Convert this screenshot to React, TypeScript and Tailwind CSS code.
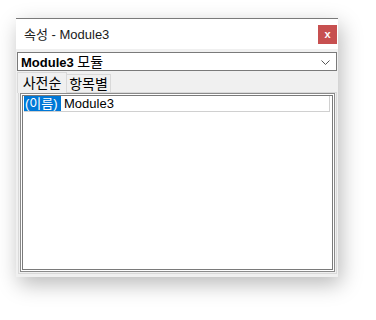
import React from "react";

export default function App() {
  const font = { fontFamily: '"Liberation Sans", "Noto Sans CJK KR", sans-serif' };
  return (
    <div className="w-[376px] h-[320px] bg-white pt-[18px] pl-[16px]" style={font}>
      <div className="w-[322px] h-[259px] flex flex-col bg-[#f0f0f0] border-t border-[#7a7a7a] shadow-[3px_7px_20px_rgba(0,0,0,0.28)]">
        {/* title bar */}
        <div className="h-[30px] bg-white flex items-center pl-[8px] pr-[1px] shrink-0">
          <span className="text-[13px] text-[#1a1a1a] leading-none mt-[1px]">속성 - Module3</span>
          <div className="ml-auto w-[19px] h-[19px] mt-[1px] bg-[#c75050] flex items-center justify-center text-white text-[11px] font-bold leading-none">
            x
          </div>
        </div>
        {/* dropdown */}
        <div className="mt-[3px] mx-[1px] h-[19px] shrink-0 border border-[#7a7a7a] bg-white flex items-center pl-[3px] pr-[6px]">
          <span className="text-[13px] leading-none text-black">
            <span className="font-bold">Module3</span> <span className="text-[14px]">모듈</span>
          </span>
          <svg className="ml-auto mt-[2px]" width="9" height="5" viewBox="0 0 9 5">
            <path d="M0.5 0.5 L4.5 4.5 L8.5 0.5" stroke="#555" strokeWidth="1" fill="none" />
          </svg>
        </div>
        {/* tabs */}
        <div className="mt-[1px] pl-[1px] h-[20px] flex items-end shrink-0">
          <div className="h-[21px] w-[50px] border-t border-l border-r border-[#d9d9d9] bg-[#f0f0f0] flex items-center justify-center text-[14px] text-black leading-none relative z-10 -mb-px">
            사전순
          </div>
          <div className="h-[18px] w-[44px] border-t border-r border-[#d9d9d9] bg-[#f0f0f0] flex items-center justify-center text-[14px] text-black leading-none">
            항목별
          </div>
        </div>
        {/* panel */}
        <div className="flex-1 ml-[2px] mr-[1px] mb-[3px] border border-[#d9d9d9] bg-[#f0f0f0] pl-[1px] pr-[1px] pb-[1px] flex">
          <div className="flex-1 border border-[#8a8a8a] bg-white p-px flex">
            <div className="flex-1 border border-[#7a7a7a] bg-white flex flex-col">
              <div className="h-[16px] border-b border-r border-[#d0d0d0] mr-[2px] ml-px flex items-stretch">
                <div className="w-[37px] bg-[#0078d7] text-white text-[13px] leading-none flex items-center pl-px">
                  (이름)
                </div>
                <div className="ml-[2px] pl-px text-[13px] text-black leading-none flex items-center">
                  Module3
                </div>
              </div>
            </div>
          </div>
        </div>
      </div>
    </div>
  );
}
